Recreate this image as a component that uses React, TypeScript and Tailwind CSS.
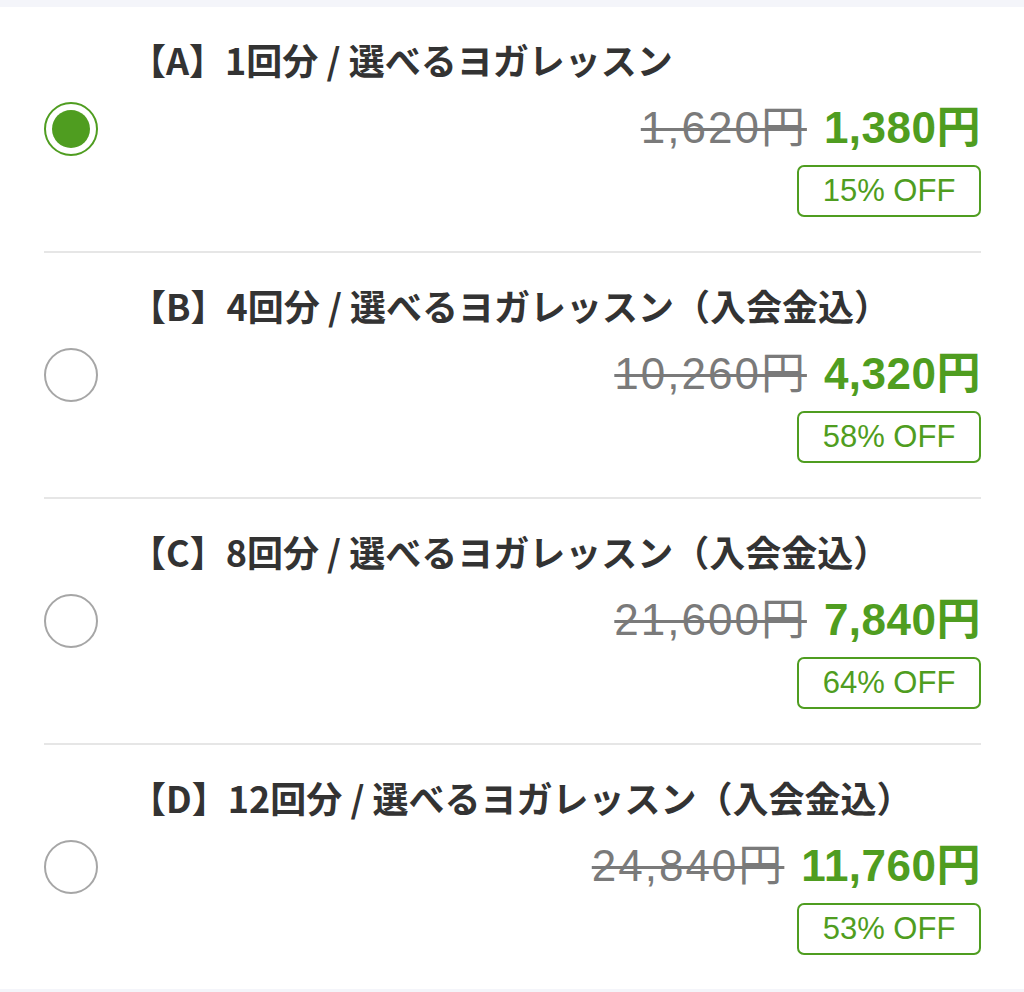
import React from "react";

type Plan = {
  label: string;
  title: string;
  old: string;
  price: string;
  off: string;
  selected?: boolean;
};

const plans: Plan[] = [
  { label: "A", title: "1回分 / 選べるヨガレッスン", old: "1,620円", price: "1,380円", off: "15% OFF", selected: true },
  { label: "B", title: "4回分 / 選べるヨガレッスン（入会金込）", old: "10,260円", price: "4,320円", off: "58% OFF" },
  { label: "C", title: "8回分 / 選べるヨガレッスン（入会金込）", old: "21,600円", price: "7,840円", off: "64% OFF" },
  { label: "D", title: "12回分 / 選べるヨガレッスン（入会金込）", old: "24,840円", price: "11,760円", off: "53% OFF" },
];

function Radio({ on }: { on?: boolean }) {
  if (on) {
    return (
      <div className="w-[54px] h-[54px] rounded-full border-2 border-[#4f9d20] flex items-center justify-center shrink-0">
        <div className="w-[38px] h-[38px] rounded-full bg-[#4f9d20]" />
      </div>
    );
  }
  return <div className="w-[54px] h-[54px] rounded-full border-2 border-[#a6a6a6] shrink-0" />;
}

function Row({ p }: { p: Plan }) {
  return (
    <div className="flex items-center h-[244px]">
      <Radio on={p.selected} />
      <div className="flex-1 ml-[32px] h-full pt-[28px] flex flex-col items-stretch">
        <div
          className="text-[36px] leading-[48px] font-bold text-[#333333] whitespace-nowrap"
          style={{ fontFamily: '"Noto Sans CJK JP", "Noto Sans", sans-serif' }}
        >
          【{p.label}】{p.title}
        </div>
        <div
          className="mt-[20px] flex justify-end items-baseline gap-[17px] text-[44px] leading-[50px]"
          style={{ fontFamily: '"Liberation Sans", "Noto Sans CJK JP", sans-serif' }}
        >
          <span className="text-[#7a7a7a] tracking-[2px] line-through decoration-[3px]">{p.old}</span>
          <span className="text-[#4f9d20] font-bold tracking-[0.5px]">{p.price}</span>
        </div>
        <div className="mt-[12px] flex justify-end">
          <div
            className="h-[52px] w-[184px] border-2 border-[#4f9d20] rounded-[7px] flex items-center justify-center text-[31px] text-[#4f9d20]"
            style={{ fontFamily: '"Liberation Sans", sans-serif' }}
          >
            {p.off}
          </div>
        </div>
      </div>
    </div>
  );
}

export default function App() {
  return (
    <div className="w-[1024px] h-[992px] bg-white flex flex-col overflow-hidden">
      <div className="h-[7px] bg-[#f4f5fa]" />
      <div className="pl-[44px] pr-[43px] flex flex-col">
        {plans.map((p, i) => (
          <React.Fragment key={p.label}>
            {i > 0 && <div className="h-[2px] bg-[#e6e6e6]" />}
            <Row p={p} />
          </React.Fragment>
        ))}
      </div>
      <div className="flex-1 bg-[#f4f5fa]" />
    </div>
  );
}
